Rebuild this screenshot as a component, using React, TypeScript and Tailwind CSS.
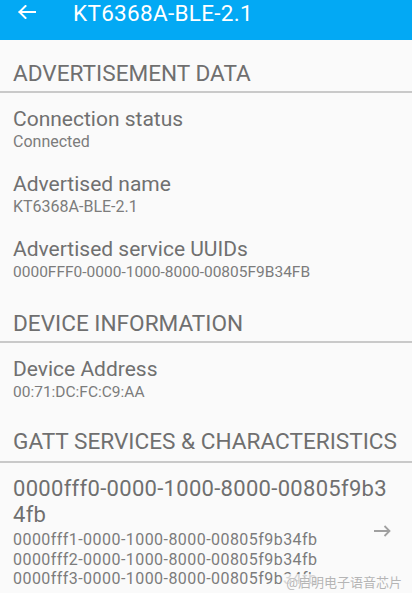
import React from "react";

const Heading = ({ text, mt, pb }: { text: string; mt: string; pb: string }) => (
  <div className={`${mt}`}>
    <div className={`pl-[13px] whitespace-nowrap text-[22.6px] leading-[22px] text-[#6f6f6f] ${pb}`}>{text}</div>
    <div className="h-[2px] bg-[#c9c9c9]" />
  </div>
);

const Item = ({ title, value, mt, valueClass }: { title: string; value: string; mt: string; valueClass?: string }) => (
  <div className={`px-[13px] ${mt}`}>
    <div className="text-[21px] leading-[25px] text-[#707070]">{title}</div>
    <div className={`leading-[20px] text-[#7c7c7c] ${valueClass ?? "text-[16px]"}`}>{value}</div>
  </div>
);

export default function App() {
  return (
    <div
      className="w-[412px] min-h-[593px] bg-[#fafafa] overflow-hidden"
      style={{ fontFamily: "Roboto, 'Noto Sans', 'Noto Sans CJK SC', sans-serif" }}
    >
      <div className="h-[40px] bg-[#03a9f4] flex items-start">
        <svg className="ml-[18px] mt-[5px]" width="18" height="14" viewBox="0 0 18 14" fill="none">
          <path d="M1.5 7H17M7.5 1L1.5 7L7.5 13" stroke="white" strokeWidth="2" strokeLinecap="square" />
        </svg>
        <div className="ml-[37px] mt-[2px] text-[22.5px] leading-[22px] tracking-[0.3px] text-white">KT6368A-BLE-2.1</div>
      </div>

      <Heading text="ADVERTISEMENT DATA" mt="mt-[23px]" pb="pb-[6px]" />
      <Item title="Connection status" value="Connected" mt="mt-[14px]" />
      <Item title="Advertised name" value="KT6368A-BLE-2.1" mt="mt-[20px]" />
      <Item
        title="Advertised service UUIDs"
        value="0000FFF0-0000-1000-8000-00805F9B34FB"
        mt="mt-[20px]"
        valueClass="text-[15.5px]"
      />

      <Heading text="DEVICE INFORMATION" mt="mt-[31px]" pb="pb-[6px]" />
      <Item title="Device Address" value="00:71:DC:FC:C9:AA" mt="mt-[14px]" valueClass="text-[15.5px]" />

      <Heading text="GATT SERVICES & CHARACTERISTICS" mt="mt-[29px]" pb="pb-[8px]" />

      <div className="relative pl-[13px] pt-[13px] pb-[6px]">
        <div className="w-[381px] break-all text-[22px] leading-[26px] tracking-[0.3px] text-[#6f6f6f]">
          0000fff0-0000-1000-8000-00805f9b34fb
        </div>
        <div className="mt-[2px] text-[16px] leading-[19.5px] tracking-[0.45px] text-[#7c7c7c]">
          <div>0000fff1-0000-1000-8000-00805f9b34fb</div>
          <div>0000fff2-0000-1000-8000-00805f9b34fb</div>
          <div>0000fff3-0000-1000-8000-00805f9b34fb</div>
        </div>
        <svg className="absolute right-[21px] top-[62px]" width="18" height="12" viewBox="0 0 18 12" fill="none">
          <path d="M1 6H16.5M11.5 1L16.5 6L11.5 11" stroke="#a0a0a0" strokeWidth="1.8" />
        </svg>
        <div
          className="absolute right-[8px] bottom-[4px] px-[2px] text-[13px] leading-[17px] text-[#b5b5b5] bg-[#fafafa]/70"
          style={{ textShadow: "0 0 1px #ffffff" }}
        >
          @启明电子语音芯片
        </div>
      </div>
    </div>
  );
}
